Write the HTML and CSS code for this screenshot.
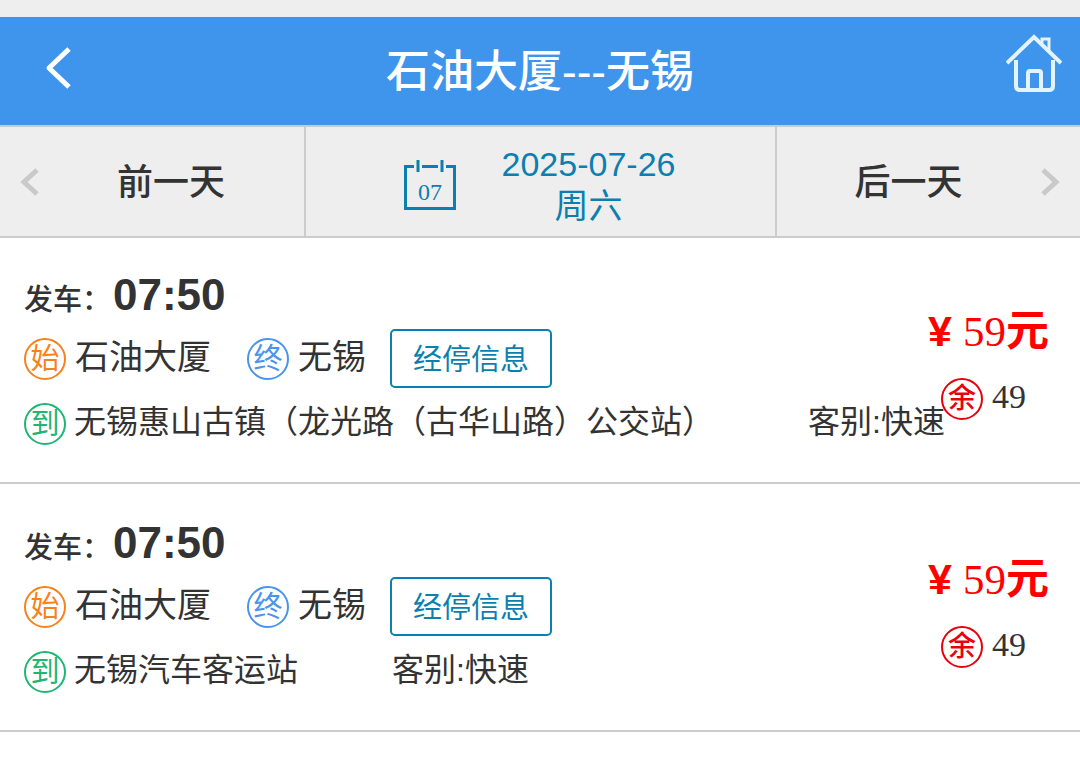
FILE: index.html
```html
<!DOCTYPE html>
<html lang="zh-CN">
<head>
    <meta charset="UTF-8">
    <meta name="viewport" content="width=device-width, initial-scale=1.0">
    <title>石油大厦---无锡</title>
    <link rel="stylesheet" href="styles.css">
</head>
<body>
    <header class="header">
        <a href="#" class="header-link" aria-label="返回">
            <svg class="back-icon" viewBox="0 0 28 44" fill="none" stroke="#fff" stroke-width="5">
                <path d="M25 3 L5 22 L25 41" stroke-linejoin="round"/>
            </svg>
        </a>
        <h1 class="header-title">石油大厦---无锡</h1>
        <a href="#" class="header-link" aria-label="首页">
            <svg class="home-icon" viewBox="0 0 56 60" fill="none" stroke="#e4f4ff" stroke-width="4">
                <path d="M1 29 L28 3 L55 29"/>
                <path d="M36 9 V5 H43 V17" stroke-width="3"/>
                <path d="M10 26 V52 Q10 56 14 56 H43 Q47 56 47 52 V26"/>
                <path d="M22 56 V39 Q22 37 24 37 H33 Q35 37 35 39 V56"/>
            </svg>
        </a>
    </header>

    <nav class="date-bar">
        <button type="button" class="day-btn">
            <svg class="arrow-icon" viewBox="0 0 20 28" fill="none" stroke="#c9c9c9" stroke-width="5">
                <path d="M17 2 L4 14 L17 26"/>
            </svg>
            <span class="day-label">前一天</span>
        </button>
        <button type="button" class="date-btn">
            <svg class="calendar-icon" viewBox="0 0 52 50" fill="none" stroke="#0b7fb0" stroke-width="3">
                <path d="M10 6.500 H1.500 V48.500 H50.500 V6.500 H42"/>
                <path d="M18 6.500 H34"/>
                <path d="M14 0 V12 M38 0 V12"/>
                <text class="calendar-text" x="26" y="40" text-anchor="middle">07</text>
            </svg>
            <span class="date-text">2025-07-26<br>周六</span>
        </button>
        <button type="button" class="day-btn">
            <span class="day-label">后一天</span>
            <svg class="arrow-icon" viewBox="0 0 20 28" fill="none" stroke="#c9c9c9" stroke-width="5">
                <path d="M3 2 L16 14 L3 26"/>
            </svg>
        </button>
    </nav>

    <main class="trip-list">
        <!-- Trip 1 -->
        <article class="trip">
            <div class="trip-info">
                <div class="trip-time">发车：<strong class="time">07:50</strong></div>
                <div class="trip-route">
                    <span class="badge badge-start">始</span>
                    <span class="station">石油大厦</span>
                    <span class="badge badge-end">终</span>
                    <span class="station">无锡</span>
                    <button type="button" class="stops-btn">经停信息</button>
                </div>
                <div class="trip-arrive">
                    <span class="badge badge-arrive">到</span>
                    <span class="arrive-name">无锡惠山古镇（龙光路（古华山路）公交站）</span>
                    <span class="trip-class">客别:快速</span>
                </div>
            </div>
            <div class="trip-side">
                <div class="price"><span class="yen">¥</span><span class="price-num">59</span>元</div>
                <div class="remain"><span class="badge badge-remain">余</span><span class="remain-num">49</span></div>
            </div>
        </article>

        <!-- Trip 2 -->
        <article class="trip">
            <div class="trip-info">
                <div class="trip-time">发车：<strong class="time">07:50</strong></div>
                <div class="trip-route">
                    <span class="badge badge-start">始</span>
                    <span class="station">石油大厦</span>
                    <span class="badge badge-end">终</span>
                    <span class="station">无锡</span>
                    <button type="button" class="stops-btn">经停信息</button>
                </div>
                <div class="trip-arrive">
                    <span class="badge badge-arrive">到</span>
                    <span class="arrive-name">无锡汽车客运站</span>
                    <span class="trip-class">客别:快速</span>
                </div>
            </div>
            <div class="trip-side">
                <div class="price"><span class="yen">¥</span><span class="price-num">59</span>元</div>
                <div class="remain"><span class="badge badge-remain">余</span><span class="remain-num">49</span></div>
            </div>
        </article>
    </main>
</body>
</html>
```
FILE: styles.css
```css
* {
    box-sizing: border-box;
}

body {
    margin: 0;
    border-top: 17px solid #eee;
    background: #fff;
    color: #333;
    font-family: "Liberation Sans", "Noto Sans CJK SC", sans-serif;
}

button {
    margin: 0;
    padding: 0;
    border: none;
    background: none;
    color: inherit;
    font-family: inherit;
    cursor: pointer;
}

svg {
    display: block;
    flex: none;
}

.header {
    display: flex;
    align-items: flex-start;
    justify-content: space-between;
    height: 108px;
    padding: 17px 18px 0 44px;
    background: #3f94ec;
}

.header-link {
    display: flex;
    align-items: center;
    width: 56px;
    height: 60px;
}

.header-link:first-child {
    height: 68px;
    margin-right: -26px;
}

.back-icon {
    width: 28px;
    height: 44px;
}

.home-icon {
    width: 56px;
    height: 60px;
}

.header-title {
    flex: 1;
    margin: 0;
    padding-top: 8px;
    color: #fff;
    font-size: 44px;
    font-weight: 500;
    line-height: 60px;
    text-align: center;
}

.date-bar {
    display: grid;
    grid-template-columns: 306fr 471fr 303fr;
    height: 113px;
    border-top: 2px solid #c8cccf;
    border-bottom: 2px solid #ccc;
    background: #eee;
}

.day-btn {
    display: flex;
    align-items: center;
    padding: 0 20px;
    font-size: 36px;
    font-weight: 500;
}

.day-btn:first-child {
    padding-right: 2px;
}

.day-btn:last-child {
    padding-left: 0;
}

.day-btn:not(:last-child),
.date-btn {
    border-right: 2px solid #ccc;
}

.day-label {
    flex: 1;
    padding-bottom: 6px;
}

.arrow-icon {
    width: 20px;
    height: 28px;
}

.date-btn {
    display: flex;
    align-items: center;
    justify-content: center;
    gap: 46px;
    padding: 6px 2px 0 0;
    color: #0b7fb0;
}

.calendar-icon {
    width: 52px;
    height: 50px;
}

.calendar-text {
    fill: #0b7fb0;
    stroke: none;
    font-family: "Liberation Serif", serif;
    font-size: 24px;
}

.date-text {
    font-size: 34px;
    line-height: 42px;
}

/* the list tucks under the date bar's line */
.trip-list {
    margin-top: -2px;
}

.trip {
    display: flex;
    justify-content: space-between;
    padding: 33px 31px 36px 24px;
    border-bottom: 2px solid #ccc;
    white-space: nowrap;
}

.trip-info {
    flex: 1;
    min-width: 0;
}

.trip-time {
    height: 52px;
    margin-bottom: 8px;
    font-size: 29px;
    font-weight: 500;
    line-height: 52px;
}

.time {
    padding-left: 2px;
    font-size: 44px;
}

.trip-route {
    display: flex;
    align-items: center;
    height: 59px;
    margin-bottom: 14px;
}

.badge {
    display: flex;
    flex: none;
    align-items: center;
    justify-content: center;
    width: 42px;
    height: 42px;
    margin-right: 9px;
    border: 2px solid;
    border-radius: 50%;
    font-size: 29px;
    line-height: 38px;
}

.badge-start {
    color: #f5821f;
}

.badge-end {
    color: #4a94ea;
}

.badge-arrive {
    margin-right: 8px;
    color: #1fb573;
}

.badge-remain {
    color: #e8000d;
    font-size: 28px;
    font-weight: 500;
}

.station {
    margin-right: 36px;
    padding-bottom: 4px;
    font-size: 34px;
    line-height: 44px;
}

.station + .stops-btn {
    margin-left: -12px;
}

.stops-btn {
    width: 162px;
    height: 59px;
    padding-bottom: 4px;
    border: 2px solid #0b7fb0;
    border-radius: 5px;
    color: #0b7fb0;
    font-size: 29px;
}

.trip-arrive {
    display: flex;
    align-items: center;
    height: 44px;
    font-size: 32px;
    line-height: 40px;
}

.arrive-name {
    margin-right: 94px;
}

.arrive-name,
.trip-class {
    padding-bottom: 4px;
}

.trip-side {
    flex: none;
    padding-top: 34px;
}

.price {
    color: #f00;
    font-size: 43px;
    font-weight: bold;
    line-height: 56px;
}

.yen {
    margin-right: 11px;
}

.price-num {
    font-family: "Liberation Serif", serif;
    font-weight: normal;
}

.remain {
    display: flex;
    align-items: center;
    justify-content: flex-end;
    height: 42px;
    margin-top: 18px;
    padding-right: 23px;
}

.remain-num {
    padding-bottom: 4px;
    font-family: "Liberation Serif", serif;
    font-size: 34px;
}
```
